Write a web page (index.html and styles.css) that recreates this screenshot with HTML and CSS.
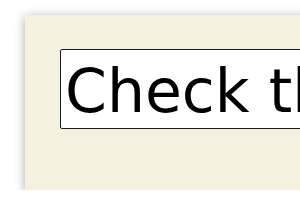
FILE: index.html
```html
<!DOCTYPE html>
<html lang="en">
<head>
    <meta charset="UTF-8">
    <meta name="viewport" content="width=device-width, initial-scale=1.0">
    <title>Check this</title>
    <link rel="stylesheet" href="styles.css">
</head>
<body>
    <div class="panel">
        <input type="text" class="big-input" value="Check this out">
    </div>
</body>
</html>
```

FILE: styles.css
```css
html, body {
    margin: 0;
    padding: 0;
    overflow: hidden;
    background-color: white;
}

.panel {
    margin: 15px 0 0 25px;
    width: 330px;
    height: 175px;
    box-sizing: border-box;
    padding: 34px 0 0 35px;
    background-color: #f4f2df;
    box-shadow: 0 2px 10px rgba(0, 0, 0, 0.35);
}

.big-input {
    display: block;
    box-sizing: border-box;
    width: 320px;
    height: 80px;
    margin: 0;
    padding: 6px 3px 2px 4px;
    font-family: "DejaVu Sans", sans-serif;
    font-size: 60px;
    color: black;
    background-color: white;
    border: 1px solid #1a1a1a;
    border-radius: 2px;
    outline: none;
}
```
